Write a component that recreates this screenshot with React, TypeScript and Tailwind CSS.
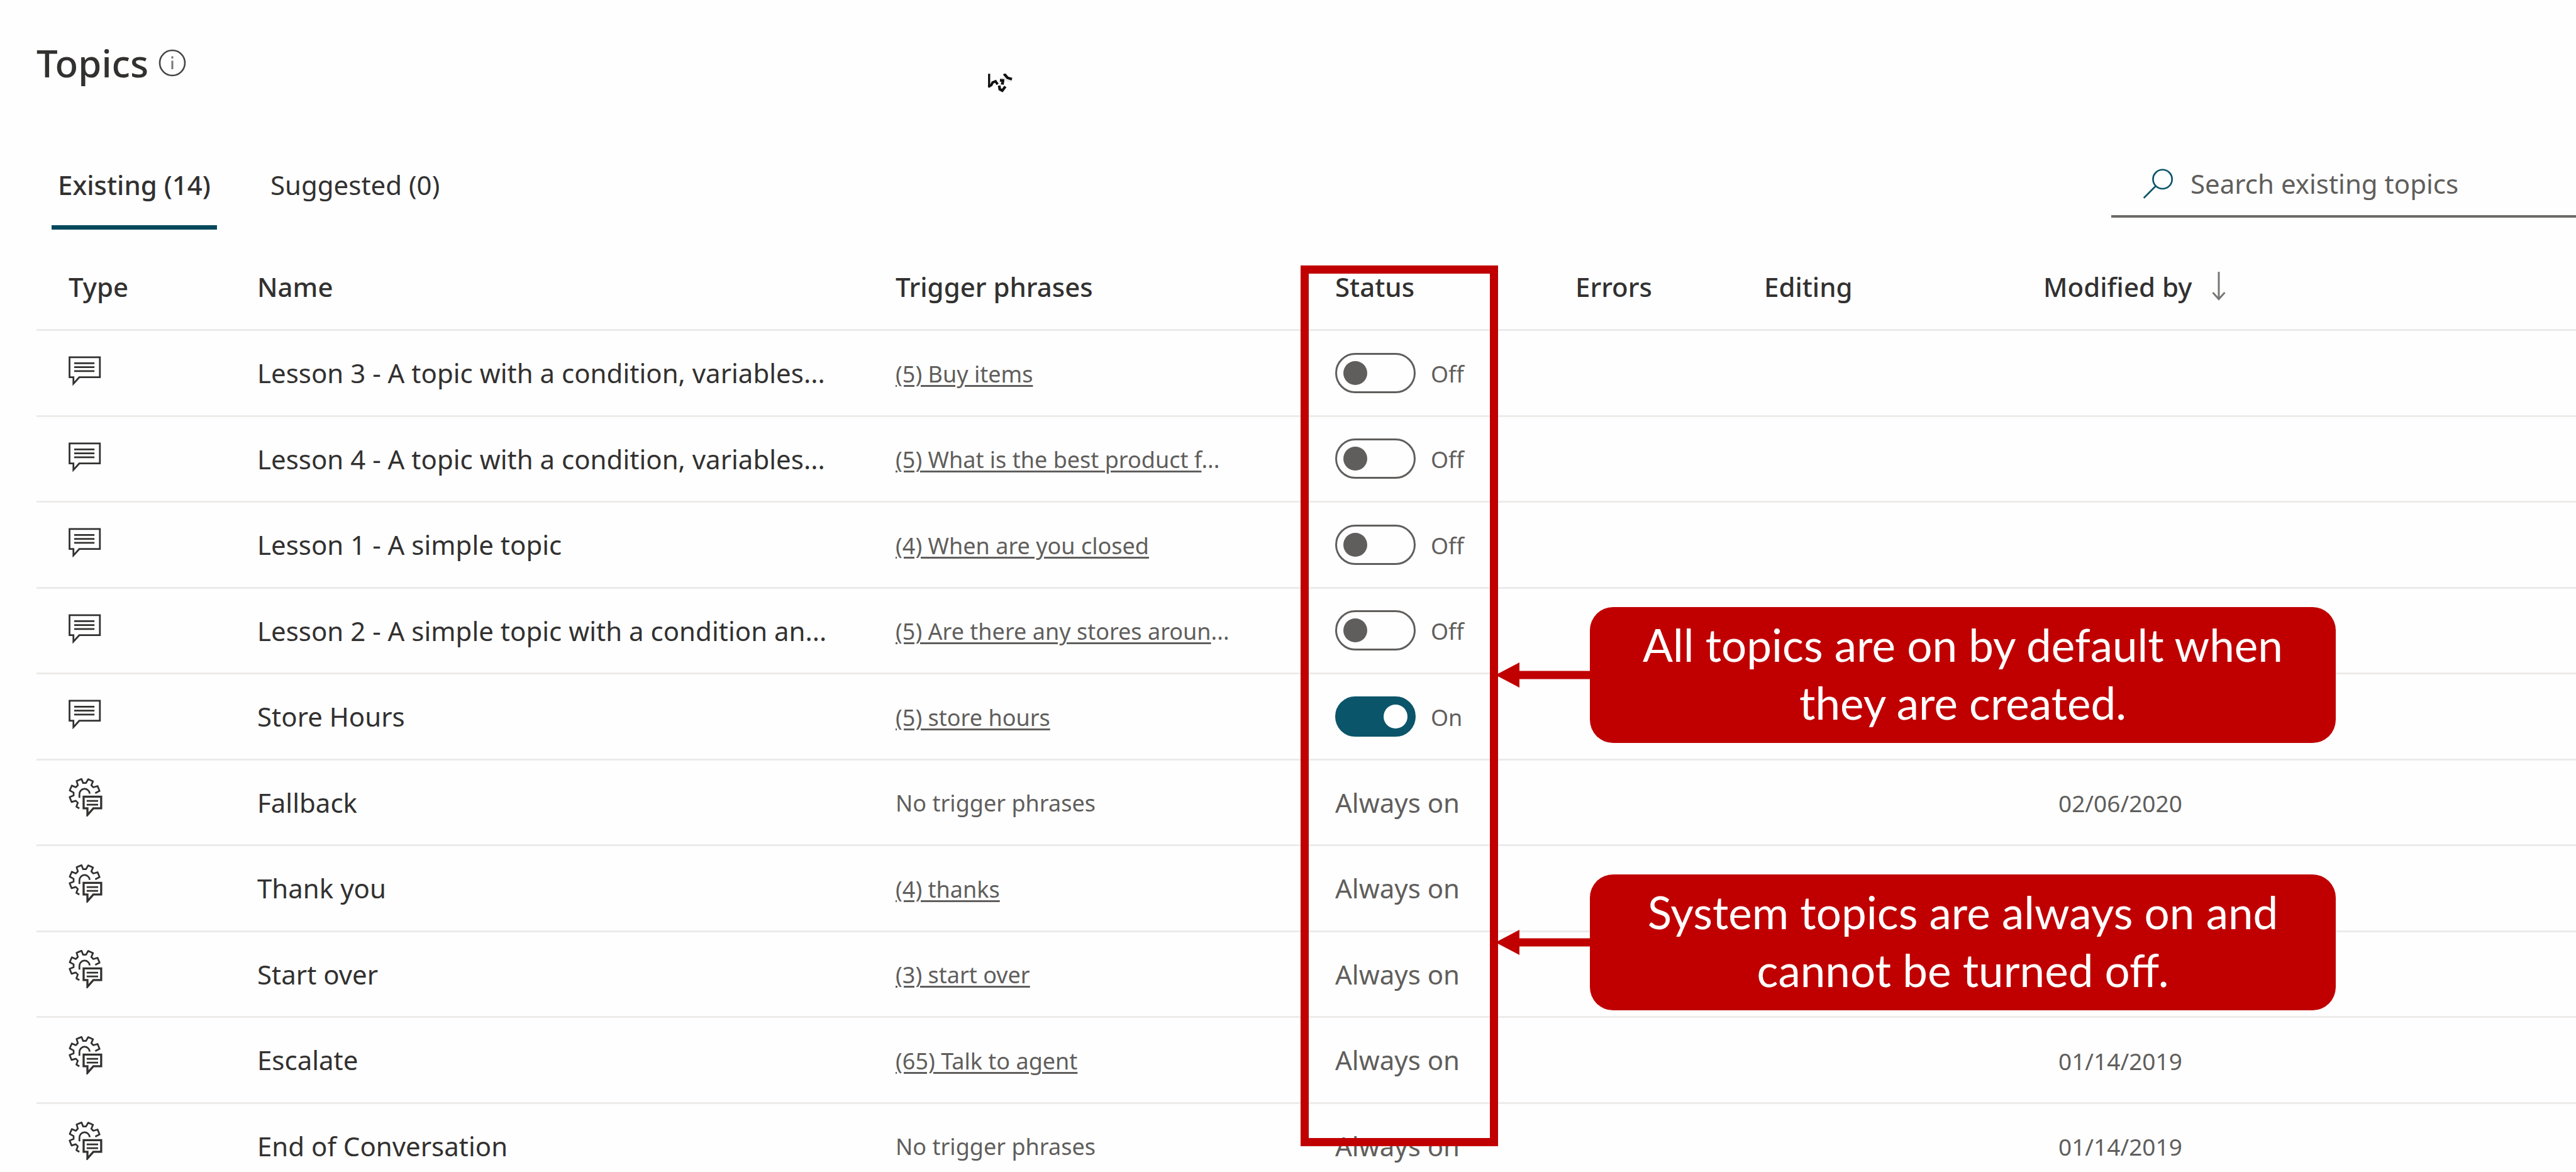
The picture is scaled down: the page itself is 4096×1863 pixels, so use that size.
import React from "react";

type Topic = {
  kind: "chat" | "system";
  name: string;
  trigger?: string;
  cut?: boolean;
  on?: boolean;
  modified?: string;
};

const topics: Topic[] = [
  { kind: "chat", name: "Lesson 3 - A topic with a condition, variables...", trigger: "(5) Buy items", on: false },
  { kind: "chat", name: "Lesson 4 - A topic with a condition, variables...", trigger: "(5) What is the best product f", cut: true, on: false },
  { kind: "chat", name: "Lesson 1 - A simple topic", trigger: "(4) When are you closed", on: false },
  { kind: "chat", name: "Lesson 2 - A simple topic with a condition an...", trigger: "(5) Are there any stores aroun", cut: true, on: false },
  { kind: "chat", name: "Store Hours", trigger: "(5) store hours", on: true },
  { kind: "system", name: "Fallback", modified: "02/06/2020" },
  { kind: "system", name: "Thank you", trigger: "(4) thanks" },
  { kind: "system", name: "Start over", trigger: "(3) start over" },
  { kind: "system", name: "Escalate", trigger: "(65) Talk to agent", modified: "01/14/2019" },
  { kind: "system", name: "End of Conversation", modified: "01/14/2019" },
];

function polar(deg: number, r: number) {
  const a = (deg * Math.PI) / 180;
  return `${(160 + r * Math.sin(a)).toFixed(1)} ${(140 - r * Math.cos(a)).toFixed(1)}`;
}

/* Open cog outline: five full teeth plus the start of a sixth. */
function cogPath() {
  const pts = [polar(85, 56)];
  for (let t = 67.5; t > -140; t -= 45) {
    pts.push(polar(t + 11, 80), polar(t - 9, 80), polar(t - 15, 58), polar(t - 30, 58));
  }
  pts.push(polar(-147, 79), polar(-160, 80));
  return "M" + pts.join("L");
}

function InfoIcon() {
  return (
    <svg viewBox="0 0 44 44" className="h-[44px] w-[44px]" fill="none" stroke="#484644" strokeWidth="2.6" aria-hidden="true">
      <circle cx="22" cy="22" r="20" />
      <path d="M22 18.5V32M22 11.5V15" stroke="#797775" strokeWidth="3" />
    </svg>
  );
}

function ChatIcon() {
  return (
    <svg viewBox="78 60 168 150" className="h-[47px] w-[52px]" fill="none" stroke="#323130" strokeWidth="9" role="img" aria-label="User topic">
      <path d="M83 65H239V168H133L103 201V168H83Z" />
      <path d="M107 96H211M107 116H211M107 136H211" />
    </svg>
  );
}

function SystemIcon() {
  return (
    <svg viewBox="76 54 178 204" className="h-[62px] w-[54px]" fill="none" stroke="#323130" strokeWidth="9" role="img" aria-label="System topic">
      <path d={cogPath()} strokeLinejoin="round" />
      <path d="M133 160V142A27 27 0 0 1 187 138" />
      <path d="M155 154H247V215H206L175 250V215H155Z" strokeWidth="11" />
      <path d="M171 176H231M171 196H231" strokeWidth="9" />
    </svg>
  );
}

function Pointer() {
  return (
    <svg viewBox="78 47 130 96" className="absolute left-[1570px] top-[117px] h-[30px] w-[40px]" fill="none" stroke="#111" strokeWidth="11" aria-hidden="true">
      <path d="M87 47V118" />
      <path d="M83 114L98 106L105 92L120 86L131 102" strokeWidth="13" />
      <path d="M143 80L158 82L155 103" strokeWidth="15" />
      <path d="M139 108L142 127L155 134L171 113" strokeWidth="14" />
      <path d="M164 47L182 68L205 75" strokeWidth="14" />
      <path d="M148 72L168 68L180 84L200 86" stroke="#ddd" strokeWidth="5" />
    </svg>
  );
}

function Toggle({ on, name }: { on: boolean; name: string }) {
  return (
    <label className="flex items-center gap-6 text-4xl">
      <input
        type="checkbox"
        role="switch"
        defaultChecked={on}
        aria-label={name}
        className="h-16 w-32 appearance-none rounded-full border-3 border-[#605e5c] px-2.5 before:mt-[10px] before:block before:size-[38px] before:rounded-full before:bg-[#605e5c] checked:border-[#0b556a] checked:bg-[#0b556a] checked:before:ml-auto checked:before:bg-white"
      />
      <span className="pt-1">{on ? "On" : "Off"}</span>
    </label>
  );
}

function Callout({ children, className }: { children: React.ReactNode; className: string }) {
  return (
    <div className={"absolute left-[2378px] flex items-center " + className}>
      <svg viewBox="0 0 150 40" className="h-10 w-[150px]" fill="#c00000" aria-hidden="true">
        <path d="M0 20L38 0V13.5H150V26.5H38V40Z" />
      </svg>
      <p className="flex h-[216px] w-[1186px] items-center justify-center rounded-[37px] bg-[#c00000] px-12 pb-1 text-center font-['Lato',sans-serif] text-[71px] leading-[92px] text-white">
        {children}
      </p>
    </div>
  );
}

export default function App() {
  return (
    <main className="relative h-screen overflow-hidden bg-[#fefefe] pl-[58px] pt-[60px] font-['Noto_Sans',sans-serif] text-[42px] text-[#323130]">
      <div className="flex items-center gap-4">
        <h1 className="text-[60px] font-medium leading-[80px]">Topics</h1>
        <button aria-label="About topics">
          <InfoIcon />
        </button>
      </div>
      <Pointer />

      <div className="mt-[124px] flex items-start justify-between">
        <div role="tablist" className="flex gap-[75px] pl-6">
          <button role="tab" aria-selected="true" className="border-b-7 border-[#00485b] px-[10px] pb-[34px] font-medium leading-[60px]">
            Existing (14)
          </button>
          <button role="tab" aria-selected="false" className="border-b-7 border-transparent px-[10px] pb-[34px] leading-[60px]">
            Suggested (0)
          </button>
        </div>
        <label className="flex w-[739px] items-center gap-7 border-b-4 border-[#6b6a67] pb-[22px] pl-[50px]">
          <svg viewBox="0 0 54 54" className="size-[54px]" fill="none" stroke="#0b556a" strokeWidth="3" aria-hidden="true">
            <circle cx="35.5" cy="19" r="17" />
            <path d="M23.5 31L2 52.5" />
          </svg>
          <input
            type="search"
            aria-label="Search existing topics"
            placeholder="Search existing topics"
            className="h-14 w-full min-w-0 leading-[56px] outline-none placeholder:text-[#605e5c]"
          />
        </label>
      </div>

      <table className="mt-[23px] w-full table-fixed text-left">
        <colgroup>
          <col className="w-[300px]" />
          <col className="w-[1015px]" />
          <col className="w-[699px]" />
          <col className="w-[382px]" />
          <col className="w-[300px]" />
          <col className="w-[444px]" />
          <col />
        </colgroup>
        <thead>
          <tr className="h-[136px] border-b-3 border-[#edebe9] *:pl-[51px] *:font-medium">
            <th>Type</th>
            <th>Name</th>
            <th>Trigger phrases</th>
            <th>Status</th>
            <th>Errors</th>
            <th>Editing</th>
            <th aria-sort="descending">
              <button className="flex items-center gap-8">
                Modified by
                <svg viewBox="0 0 22 46" className="h-[46px] w-[22px]" fill="none" stroke="#797775" strokeWidth="3" aria-hidden="true">
                  <path d="M11 0V43M1.500 33L11 43.500L20.500 33" />
                </svg>
              </button>
            </th>
          </tr>
        </thead>
        <tbody>
          {topics.map((t) => (
            <tr key={t.name} className="border-b-3 border-[#edebe9] odd:h-[137px] even:h-[136px] *:whitespace-nowrap *:pl-[51px]">
              <td>
                <div className={t.kind === "chat" ? "flex pb-1.5" : "flex pb-4"}>
                  {t.kind === "chat" ? <ChatIcon /> : <SystemIcon />}
                </div>
              </td>
              <td>{t.name}</td>
              <td className="pt-1 text-4xl text-[#605e5c]">
                {t.trigger ? (
                  <a href="#" className="underline decoration-3 underline-offset-4">
                    {t.trigger}
                  </a>
                ) : (
                  "No trigger phrases"
                )}
                {t.cut && "..."}
              </td>
              <td className="text-[#605e5c]">
                {t.on === undefined ? "Always on" : <Toggle on={t.on} name={t.name} />}
              </td>
              <td />
              <td />
              <td className="pt-1 text-[37px] text-[#605e5c]">
                <span className="pl-6">{t.modified}</span>
              </td>
            </tr>
          ))}
        </tbody>
      </table>

      <div className="pointer-events-none absolute left-[2068px] top-[422px] h-[1400px] w-[314px] border-13 border-[#c00000]" />
      <Callout className="top-[965px]">All topics are on by default when they are created.</Callout>
      <Callout className="top-[1390px]">System topics are always on and cannot be turned off.</Callout>
    </main>
  );
}
